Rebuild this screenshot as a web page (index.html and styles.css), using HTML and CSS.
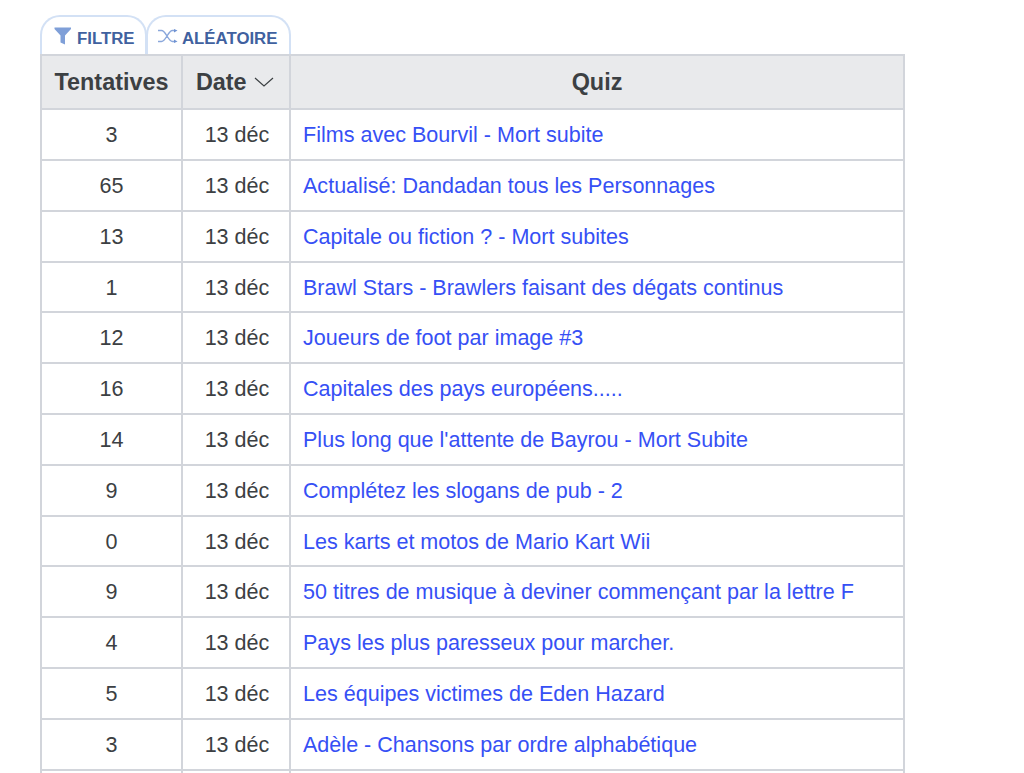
FILE: index.html
```html
<!DOCTYPE html>
<html lang="fr">
<head>
<meta charset="utf-8">
<title>Quiz</title>
<link rel="stylesheet" href="styles.css">
</head>
<body>
<main class="page">
  <nav class="tabs">
    <a class="tab tab-filter">
      <svg class="icon" width="18" height="18" viewBox="0 0 18 18"><path d="M0.500 0.500h16.500v1.500l-6 6.500v9l-4.500-2v-7l-6-6.500z" fill="#7f9fd8"/></svg>
      <span>FILTRE</span>
    </a>
    <a class="tab tab-random">
      <svg class="icon icon-shuffle" width="20" height="14" viewBox="0 0 20 14"><path d="M0 1.500h3.500c4.500 0 6.500 11 11 11h2M0 12.500h3.500c4.500 0 6.500-11 11-11h2" fill="none" stroke="#8aa7db" stroke-width="1.400"/><path d="M16 0l3.500 1.500-3.500 2zM16 10.500l3.500 2-3.500 1.500z" fill="#6f93d3"/></svg>
      <span>ALÉATOIRE</span>
    </a>
  </nav>
  <table class="quiz-table">
    <colgroup>
      <col class="col-tries"><col class="col-date"><col class="col-quiz">
    </colgroup>
    <thead>
      <tr>
        <th>Tentatives</th>
        <th class="date-head">Date <svg class="caret" width="20" height="10" viewBox="0 0 20 10"><path d="M1 1l9 8 9-8" fill="none" stroke="#3c4043" stroke-width="1.200"/></svg></th>
        <th>Quiz</th>
      </tr>
    </thead>
    <tbody>
      <tr><td>3</td><td class="date">13 déc</td><td><a>Films avec Bourvil - Mort subite</a></td></tr>
      <tr><td>65</td><td class="date">13 déc</td><td><a>Actualisé: Dandadan tous les Personnages</a></td></tr>
      <tr><td>13</td><td class="date">13 déc</td><td><a>Capitale ou fiction ? - Mort subites</a></td></tr>
      <tr><td>1</td><td class="date">13 déc</td><td><a>Brawl Stars - Brawlers faisant des dégats continus</a></td></tr>
      <tr><td>12</td><td class="date">13 déc</td><td><a>Joueurs de foot par image #3</a></td></tr>
      <tr><td>16</td><td class="date">13 déc</td><td><a>Capitales des pays européens.....</a></td></tr>
      <tr><td>14</td><td class="date">13 déc</td><td><a>Plus long que l'attente de Bayrou - Mort Subite</a></td></tr>
      <tr><td>9</td><td class="date">13 déc</td><td><a>Complétez les slogans de pub - 2</a></td></tr>
      <tr><td>0</td><td class="date">13 déc</td><td><a>Les karts et motos de Mario Kart Wii</a></td></tr>
      <tr><td>9</td><td class="date">13 déc</td><td><a>50 titres de musique à deviner commençant par la lettre F</a></td></tr>
      <tr><td>4</td><td class="date">13 déc</td><td><a>Pays les plus paresseux pour marcher.</a></td></tr>
      <tr><td>5</td><td class="date">13 déc</td><td><a>Les équipes victimes de Eden Hazard</a></td></tr>
      <tr><td>3</td><td class="date">13 déc</td><td><a>Adèle - Chansons par ordre alphabétique</a></td></tr>
      <tr><td>&nbsp;</td><td>&nbsp;</td><td>&nbsp;</td></tr>
    </tbody>
  </table>
</main>
</body>
</html>
```
FILE: styles.css
```css
html, body {
  margin: 0;
  padding: 0;
  height: 773px;
  overflow: hidden;
  background: #fff;
}
body {
  font-family: "Liberation Sans", Arial, sans-serif;
  color: #3c4043;
}
.page {
  padding: 15px 0 0 40px;
  width: 866px;
}
.tabs {
  display: flex;
  height: 39px;
}
.tab {
  display: flex;
  align-items: center;
  gap: 5px;
  box-sizing: border-box;
  height: 39px;
  border: 2px solid #d3e1f5;
  border-bottom: 0;
  border-radius: 20px 20px 0 0;
  font-size: 16.800px;
  font-weight: 700;
  color: #40619f;
  padding-top: 6px;
}
.tab-filter {
  width: 107px;
  padding-left: 12px;
}
.tab-random {
  width: 145px;
  margin-left: -1px;
  padding-left: 10px;
  gap: 4px;
}
.icon {
  flex: none;
  position: relative;
  top: -3px;
}
.quiz-table {
  border-collapse: collapse;
  table-layout: fixed;
  width: 865px;
  font-size: 21.550px;
}
.col-tries { width: 141px; }
.col-date { width: 108px; }
th, td {
  border: 2px solid #d2d5db;
  text-align: center;
  padding: 0 12px;
  white-space: nowrap;
}
th {
  height: 52.300px;
  background: #e9eaec;
  font-weight: 700;
  font-size: 23.400px;
  padding: 0;
}
.date-head {
  padding-right: 2px;
}
td {
  height: 47.800px;
  padding-top: 1px;
}
.date {
  padding-left: 14px;
}
td:last-child {
  text-align: left;
}
td a {
  color: #3650f5;
}
.caret {
  margin-left: 1px;
  vertical-align: 3px;
}
```
